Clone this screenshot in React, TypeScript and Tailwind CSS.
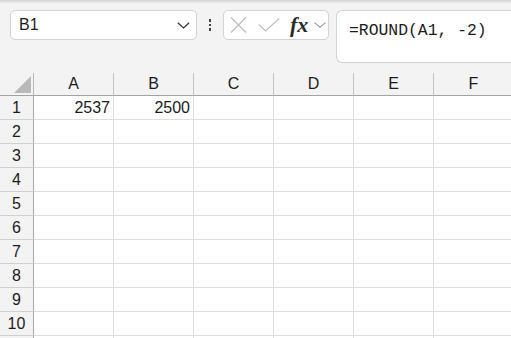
import React from 'react';

const columns = ['A', 'B', 'C', 'D', 'E', 'F'];
const rows = [1, 2, 3, 4, 5, 6, 7, 8, 9, 10];

// values typed into the sheet, keyed by cell
const values: Record<string, string> = {
  A1: '2537',
  B1: '2500',
};

export default function App() {
  return (
    <div
      className="w-[511px] h-[338px] overflow-hidden bg-[#f3f3f3] text-[#1b1b1b]"
      style={{ fontFamily: '"Liberation Sans", Arial, sans-serif' }}
    >
      {/* shadow under the ribbon */}
      <div className="h-[3px] bg-gradient-to-b from-[#d2d2d2] to-[#ececec]" />

      {/* Formula bar */}
      <div className="flex items-start h-[70px] pl-[10px] pt-[7px]">
        {/* Name box */}
        <div className="w-[187px] h-[30px] shrink-0 flex items-center justify-between bg-white border border-[#d3d3d3] rounded-[5px] pl-[8px] pr-[6px]">
          <span className="text-[16px] leading-none">B1</span>
          <svg width="13" height="7" viewBox="0 0 13 7" fill="none">
            <path d="M0.8 0.8 L6.5 6 L12.2 0.8" stroke="#333" strokeWidth="1.2" />
          </svg>
        </div>

        {/* More menu dots */}
        <div className="w-[26px] h-[30px] shrink-0 flex flex-col items-center justify-center gap-[2px]">
          <div className="w-[2.5px] h-[2.5px] bg-[#444]" />
          <div className="w-[2.5px] h-[2.5px] bg-[#444]" />
          <div className="w-[2.5px] h-[2.5px] bg-[#444]" />
        </div>

        {/* Cancel / Enter / Insert function */}
        <div className="w-[106px] h-[30px] shrink-0 flex items-center bg-white border border-[#d3d3d3] rounded-[5px] pl-[6px]">
          <svg width="17" height="16" viewBox="0 0 17 16" fill="none" className="shrink-0">
            <path d="M1 0.5 L16 15.5 M16 0.5 L1 15.5" stroke="#bdbdbd" strokeWidth="1.2" />
          </svg>
          <svg width="22" height="14" viewBox="0 0 22 14" fill="none" className="ml-[11px] shrink-0">
            <path d="M0.8 6.5 L7.5 13 L21.2 0.5" stroke="#bdbdbd" strokeWidth="1.2" />
          </svg>
          <span
            className="ml-[10px] text-[22px] italic font-semibold leading-none text-[#2a2a2a]"
            style={{ fontFamily: '"Liberation Serif", "Times New Roman", serif' }}
          >
            fx
          </span>
          <svg width="12" height="6" viewBox="0 0 12 6" fill="none" className="ml-[6px] shrink-0">
            <path d="M0.6 0.6 L6 5.2 L11.4 0.6" stroke="#9a9a9a" strokeWidth="1.1" />
          </svg>
        </div>

        {/* Formula input */}
        <div className="ml-[7px] w-[190px] h-[53px] shrink-0 bg-white border border-r-0 border-[#d3d3d3] rounded-l-[6px] pl-[12px] pt-[7px]">
          <span
            className="text-[16.4px] leading-none whitespace-pre text-[#1b1b1b]"
            style={{ fontFamily: '"Liberation Mono", "Courier New", monospace' }}
          >
            =ROUND(A1, -2)
          </span>
        </div>
      </div>

      {/* Sheet grid */}
      <div className="grid grid-cols-[34px_repeat(6,80px)]">
        {/* corner */}
        <div className="h-[23px] bg-[#f3f3f3] border-r border-b border-r-[#b8b8b8] border-b-[#a2a2a2] flex items-end justify-end pr-[2px] pb-[2px]">
          <svg width="17" height="17" viewBox="0 0 17 17">
            <polygon points="17,0 17,17 0,17" fill="#b9b9b9" />
          </svg>
        </div>
        {columns.map((c) => (
          <div
            key={c}
            className="h-[23px] bg-[#f3f3f3] border-r border-b border-r-[#c4c4c4] border-b-[#a2a2a2] flex items-center justify-center text-[16px]"
          >
            {c}
          </div>
        ))}

        {rows.map((r) => (
          <React.Fragment key={r}>
            <div className="h-[24px] bg-[#f3f3f3] border-r border-b border-r-[#a8a8a8] border-b-[#d0d0d0] flex items-center justify-center text-[16px]">
              {r}
            </div>
            {columns.map((c) => (
              <div
                key={c + r}
                className="h-[24px] bg-white border-r border-b border-[#dedede] flex items-center justify-end pr-[3px] text-[16px]"
              >
                {values[c + r] ?? ''}
              </div>
            ))}
          </React.Fragment>
        ))}

        {/* top sliver of the next row */}
        <div className="h-[24px] bg-[#f3f3f3] border-r border-r-[#a8a8a8]" />
        {columns.map((c) => (
          <div key={c + 'next'} className="h-[24px] bg-white border-r border-[#dedede]" />
        ))}
      </div>
    </div>
  );
}
